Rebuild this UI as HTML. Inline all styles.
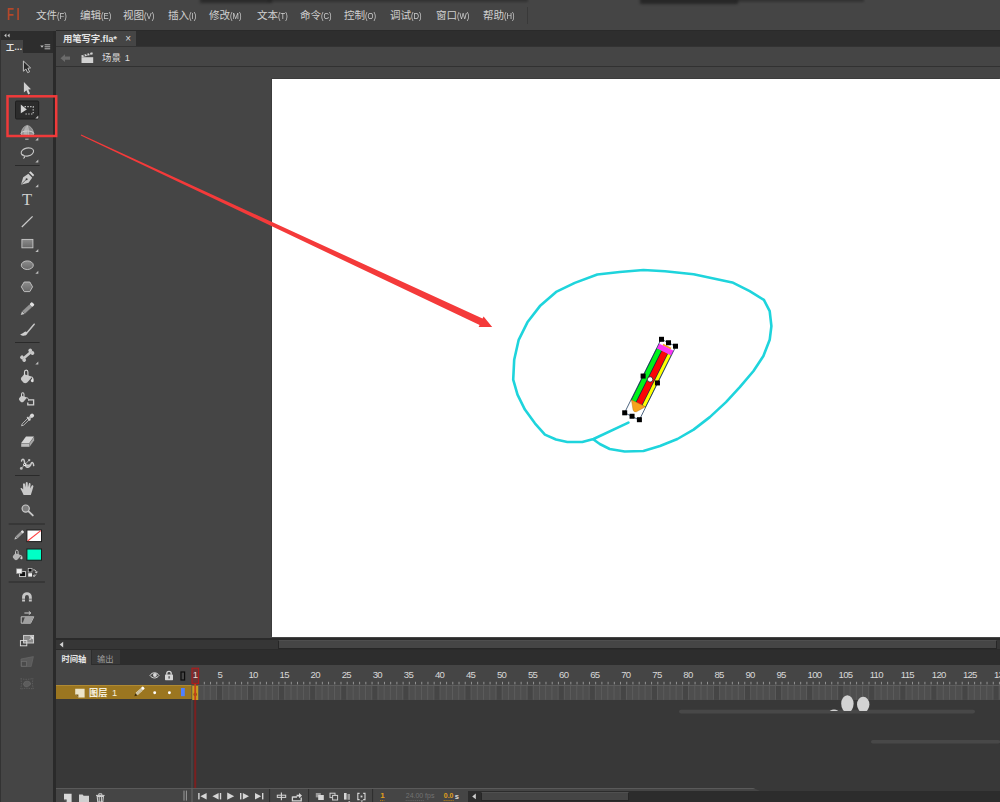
<!DOCTYPE html>
<html lang="zh-CN">
<head>
<meta charset="utf-8">
<title>用笔写字.fla</title>
<style>
*{box-sizing:border-box;margin:0;padding:0}
html,body{width:1000px;height:802px;overflow:hidden;background:#454545}
body{position:relative;font-family:"Liberation Sans","Noto Sans CJK SC",sans-serif;color:#d6d6d6;font-size:11px}
.abs{position:absolute}
#menubar{left:0;top:0;width:1000px;height:30px;background:#454545}
#menubar .mi{position:absolute;top:8px;height:14px;line-height:14px;font-size:10.6px;color:#d0d0d0;white-space:nowrap}
#menubar .mi i{font-style:normal;font-size:9.8px;display:inline-block;transform:scaleX(.78);transform-origin:0 50%;margin-left:0.3px}
#fl{position:absolute;left:7.3px;top:4.9px;font-size:16px;line-height:20px;color:#b5482a;font-weight:700;letter-spacing:3.5px}
/* tool panel */
#tools{left:0;top:30px;width:56px;height:772px;background:#454545}
#docbar{left:56px;top:30px;width:944px;height:17px;background:#2e2e2e}
#doctab{left:56px;top:31px;width:80px;height:16px;background:#454545}
#scenebar{left:56px;top:47px;width:944px;height:20px;background:#454545}
#stagebg{left:56px;top:67px;width:944px;height:571px;background:#454545}
#stage{left:272px;top:78.7px;width:728px;height:558.8px;background:#fff;box-shadow:-1px -1px 0 0 #3c3c3c}
#timeline{left:56px;top:651px;width:944px;height:151px;background:#383838}

#fl{transform:scaleX(0.72);transform-origin:0 0}
.ln{position:absolute;background:#2a2a2a}
#doctab .t{position:absolute;left:7px;top:1px;font-size:9.4px;line-height:13px;font-weight:700;color:#e4e4e4;white-space:nowrap;letter-spacing:-0.1px}
#doctab .x{position:absolute;left:69.2px;top:1px;font-size:10px;line-height:14px;color:#dadada;font-weight:400}
#scenebar .t{position:absolute;left:46px;top:4px;font-size:9.4px;line-height:13px;color:#dcdcdc;white-space:nowrap}

.tabt{font-size:8.3px;line-height:12px;white-space:nowrap}
#frames{background:#4e4e4e;border-top:1px solid #5e5e5e}
svg{position:absolute;overflow:visible}
</style>
</head>
<body>
<div id="menubar" class="abs">
  <div id="fl">Fl</div>
  <div class="mi" style="left:36px">文件<i>(F)</i></div>
  <div class="mi" style="left:80px">编辑<i>(E)</i></div>
  <div class="mi" style="left:123px">视图<i>(V)</i></div>
  <div class="mi" style="left:168px">插入<i>(I)</i></div>
  <div class="mi" style="left:209px">修改<i>(M)</i></div>
  <div class="mi" style="left:257px">文本<i>(T)</i></div>
  <div class="mi" style="left:300px">命令<i>(C)</i></div>
  <div class="mi" style="left:344px">控制<i>(O)</i></div>
  <div class="mi" style="left:390px">调试<i>(D)</i></div>
  <div class="mi" style="left:436px">窗口<i>(W)</i></div>
  <div class="mi" style="left:483px">帮助<i>(H)</i></div>
</div>
<div class="abs" style="left:0;top:0;width:1000px;height:10px;overflow:hidden;pointer-events:none">
  <div class="abs" style="left:200px;top:-5px;width:72px;height:8px;background:#222;opacity:.75;filter:blur(1.5px)"></div>
  <div class="abs" style="left:268px;top:-5px;width:260px;height:6.5px;background:#222;opacity:.5;filter:blur(1.2px)"></div>
  <div class="abs" style="left:640px;top:-5px;width:98px;height:8.5px;background:#222;opacity:.85;filter:blur(1.5px)"></div>
  <div class="abs" style="left:736px;top:-5px;width:128px;height:6.5px;background:#222;opacity:.5;filter:blur(1.2px)"></div>
</div>
<div class="ln" style="left:527px;top:7px;width:1px;height:17px;background:#393939"></div>
<div id="docbar" class="abs"></div>
<div id="doctab" class="abs"><span class="t">用笔写字.fla*</span><span class="x">×</span></div>
<div id="scenebar" class="abs">
  <svg style="left:4px;top:7px" width="11" height="9" viewBox="0 0 11 9"><path d="M0.5 4.2 L5 0.3 V2.6 H10 V5.8 H5 V8.1 Z" fill="#6b6b6b"/></svg>
  <svg style="left:25px;top:5px" width="13" height="12" viewBox="0 0 13 12"><path d="M0.5 5.2 H12.2 V11 H0.5 Z" fill="#d2d2d2"/><path d="M0.2 3.4 L11.3 0.2 L11.9 2.2 L0.8 5.2 Z" fill="#d2d2d2"/><path d="M2.6 2.6 l1 1.7 M5.4 1.8 l1 1.7 M8.2 1 l1 1.7" stroke="#454545" stroke-width="1.1"/></svg>
  <span class="t">场景<span style="margin-left:4px">1</span></span>
</div>
<div class="ln" style="left:0;top:30px;width:1000px;height:1px"></div>
<div class="ln" style="left:56px;top:46px;width:944px;height:1px;background:#333"></div>
<div class="ln" style="left:56px;top:66.4px;width:944px;height:1.6px;background:#313131"></div>
<div id="stagebg" class="abs"></div>
<div id="stage" class="abs"></div>
<!--STAGE_START-->
<svg id="stagesvg" style="left:0;top:0" width="1000" height="802" viewBox="0 0 1000 802">
  <!-- cyan hand-drawn curve -->
  <polyline fill="none" stroke="#1ed4dc" stroke-width="2.6" stroke-linejoin="round" stroke-linecap="round"
   points="593.5,439.5 599.8,444 609.7,449 624.7,451.5 643.4,451 660,446 677.4,439 693.6,429.6 709.8,417.1 726,402.1 739.8,387.2 753.5,371 763.4,356 769.7,339.8 771.4,326.1 769.7,311.1 763.9,299.9 749.7,291.2 732.3,282.4 693.6,274.2 665,271.2 643.4,270 619.7,272 597.3,274.5 574.8,282.9 556.1,291.9 539.9,306.1 527.4,322.3 518.7,339.8 514.2,359.8 513.2,379.7 517.5,394.7 524.9,409.6 534.9,423.3 544.9,434.6 556,439.5 567.3,442 582.3,442 593.5,439 628.4,422.6"/>
  <!-- red annotation arrow -->
  <path d="M81.2 134.6 L482.5 318.5 L483.6 316.4 L492.2 326.9 L478.6 327.1 L479.6 325 L80.8 135.6 Z" fill="#f43a3a"/>
  <!-- pencil symbol with free-transform box -->
  <g transform="translate(661.5 339.3) rotate(26.4) translate(-0.4 0)">
    <rect x="4" y="3.2" width="9" height="2" fill="#f7a21c"/>
    <rect x="0" y="10" width="16.4" height="58" fill="#0b2c4e"/>
    <rect x="0.6" y="10" width="4.6" height="57.6" fill="#00f21a"/>
    <rect x="6" y="10" width="6" height="57.6" fill="#fb0505"/>
    <rect x="12.7" y="10" width="3.2" height="57.6" fill="#ffff00"/>
    <rect x="0" y="4.8" width="16.4" height="5.4" fill="#fa35f6"/>
    <path d="M0.4 67.6 H16 L10.2 76 Q8.2 77.8 6.4 76 Z" fill="#f7a21c" stroke="#b07414" stroke-width="0.4"/>
    <rect x="0" y="0" width="16.4" height="82.2" fill="none" stroke="#1b3a5c" stroke-width="0.7"/>
  </g>
  <circle cx="650.1" cy="379.4" r="2.7" fill="#fff" stroke="#222" stroke-width="0.8"/>
  <g fill="#000"><rect x="659.00" y="336.80" width="5" height="5"/><rect x="666.00" y="340.25" width="5" height="5"/><rect x="673.00" y="343.70" width="5" height="5"/><rect x="640.60" y="373.55" width="5" height="5"/><rect x="654.95" y="380.45" width="5" height="5"/><rect x="622.20" y="410.30" width="5" height="5"/><rect x="629.55" y="413.75" width="5" height="5"/><rect x="636.90" y="417.20" width="5" height="5"/></g>
</svg>
<!--STAGE_END-->

<div id="tools" class="abs"></div>
<!--TOOLS_START-->
<!-- TOOL PANEL -->
<div class="ln" style="left:0;top:31px;width:1px;height:771px;background:#333"></div>
<div class="ln" style="left:1px;top:31px;width:53px;height:9px;background:#2d2d2d"></div>
<div class="ln" style="left:23px;top:40px;width:31px;height:13px;background:#2d2d2d"></div>
<div class="ln" style="left:53.4px;top:31px;width:2.6px;height:771px;background:#2a2a2a"></div>
<div class="abs" id="tooltab" style="left:6px;top:40.5px;font-size:8.4px;line-height:13px;font-weight:700;color:#e4e4e4;white-space:nowrap;letter-spacing:0.2px">工...</div>
<svg id="toolsvg" style="left:0;top:0" width="56" height="802" viewBox="0 0 56 802">
  <defs>
    <linearGradient id="gfill" x1="0" y1="0" x2="0" y2="1"><stop offset="0" stop-color="#8c8c8c"/><stop offset="1" stop-color="#686868"/></linearGradient>
  </defs>
  <!-- collapse arrows -->
  <path d="M6.4 33.6 L4.2 35.5 L6.4 37.4 Z M9.6 33.6 L7.4 35.5 L9.6 37.4 Z" fill="#c8c8c8"/>
  <!-- panel menu -->
  <path d="M40.2 45.6 h3.6 l-1.8 2.2 Z" fill="#c0c0c0"/>
  <path d="M44.6 44.8 h5.6 M44.6 46.8 h5.6 M44.6 48.8 h5.6" stroke="#b8b8b8" stroke-width="1"/>
  <!-- subselection (outlined arrow) -->
  <path d="M23.4 61 L23.4 71.2 L25.9 69 L27.6 72.6 L29.6 71.8 L27.9 68.2 L30.6 67.9 Z" fill="#2b2b2b" stroke="#c4c4c4" stroke-width="1" stroke-linejoin="round"/>
  <!-- selection (solid arrow) -->
  <path d="M23.9 82 L23.9 92.6 L26.4 90.3 L28.2 94.4 L30 93.6 L28.3 89.6 L31 89.3 Z" fill="#cfcfcf"/>
  <!-- selected tool: free transform -->
  <rect x="15.5" y="101" width="23.2" height="18" rx="1.2" fill="#2c2c2c" stroke="#1e1e1e" stroke-width="1"/>
  <path d="M20.8 104.6 L20.8 113.2 L26.8 109.6 Z" fill="#d4d4d4"/>
  <path d="M24.6 106.6 H33.2 V114 H24.6" fill="none" stroke="#d0d0d0" stroke-width="1.1" stroke-dasharray="1.3 1.5"/>
  <path d="M38.3 115.6 v3 h-3 Z" fill="#bdbdbd"/>
  <!-- 3d rotation -->
  <path d="M21.2 133.4 C21.4 129.4 23.8 126.2 27.3 125.4 C30.8 126.2 33.3 129.4 33.5 133.4 C31.2 135.8 23.5 135.8 21.2 133.4 Z" fill="#8c8c8c" stroke="#bcbcbc" stroke-width="0.7"/>
  <path d="M27.3 125.6 C24.6 127.4 23.4 130.6 23.6 134.6 L27.6 135.2 C27.9 131.6 27.9 128.6 27.3 125.6 Z" fill="#b0b0b0"/>
  <ellipse cx="27.4" cy="133.6" rx="6.4" ry="2.6" fill="none" stroke="#d0d0d0" stroke-width="1"/>
  <path d="M27.3 125.8 C28.6 129 28.8 132 28.4 136" fill="none" stroke="#c8c8c8" stroke-width="0.7"/>
  <path d="M25.2 139.2 h3.4" stroke="#c8c8c8" stroke-width="0.9"/>
  <path d="M38.3 137.6 v3 h-3 Z" fill="#bdbdbd"/>
  <!-- lasso -->
  <ellipse cx="27.4" cy="152" rx="6.3" ry="4" transform="rotate(-12 27.4 152)" fill="none" stroke="#c6c6c6" stroke-width="1.1"/>
  <path d="M22 154.4 C23.6 154.6 25.4 156.4 24.4 158 C23.8 158.8 23.2 158.4 23.4 157.6" fill="none" stroke="#c6c6c6" stroke-width="1"/>
  <path d="M38.3 159.4 v3 h-3 Z" fill="#bdbdbd"/>
  <path d="M15 165.5 H39.6" stroke="#2a2a2a" stroke-width="1"/>
  <!-- pen -->
  <path d="M20.9 184.8 L23.2 177.2 L28.4 173.8 L32.2 177.8 L28.6 182.8 Z" fill="#c9c9c9"/>
  <path d="M29 172.4 L30.6 171.2 L34.2 175 L33 176.6 Z" fill="#d6d6d6"/>
  <circle cx="26.6" cy="179.2" r="1" fill="#3a3a3a"/>
  <path d="M21.2 184.4 L26 179.8" stroke="#3a3a3a" stroke-width="0.7"/>
  <path d="M38.3 184.2 v3 h-3 Z" fill="#bdbdbd"/>
  <!-- line -->
  <path d="M21.8 227 L32.6 216.4" stroke="#cacaca" stroke-width="1.3"/>
  <!-- rect -->
  <rect x="21.9" y="239.4" width="11" height="8.4" fill="url(#gfill)" stroke="#c8c8c8" stroke-width="0.9"/>
  <path d="M38.3 249.0 v3 h-3 Z" fill="#bdbdbd"/>
  <!-- oval -->
  <ellipse cx="27.3" cy="265.2" rx="6" ry="4.3" fill="url(#gfill)" stroke="#c8c8c8" stroke-width="0.9"/>
  <path d="M38.3 270.8 v3 h-3 Z" fill="#bdbdbd"/>
  <!-- polystar -->
  <path d="M21.3 286.8 L24.2 282 H29.8 L32.6 286.8 L29.8 291.6 H24.2 Z" fill="url(#gfill)" stroke="#c8c8c8" stroke-width="0.9"/>
  <!-- pencil -->
  <g transform="translate(20.7 315.1) rotate(-43)">
    <path d="M0 0 L3.6 -1.9 V1.9 Z" fill="#c4c4c4"/>
    <rect x="4" y="-1.9" width="9.6" height="3.8" fill="#8e8e8e"/>
    <path d="M4 -0.6 H13.6 M4 0.7 H13.6" stroke="#a6a6a6" stroke-width="0.5"/>
    <rect x="13.8" y="-2" width="3.4" height="4" rx="1" fill="#e0e0e0"/>
  </g>
  <!-- brush -->
  <path d="M34.2 324.2 L27 332.8" stroke="#c6c6c6" stroke-width="1.5" stroke-linecap="round"/>
  <path d="M20.2 334.2 C22.6 334 23.6 331.6 25.8 331.4 C27.4 331.6 27.8 333.4 26.8 334.6 C25 336.4 21.8 336 20.2 334.2 Z" fill="#cfcfcf"/>
  <path d="M15 342.5 H39.6" stroke="#2a2a2a" stroke-width="1"/>
  <!-- bone -->
  <g transform="translate(27.2 355.2) rotate(-40)" fill="#c8c8c8">
    <rect x="-4.6" y="-1.3" width="9.2" height="2.6"/>
    <circle cx="-5.4" cy="-1.7" r="1.9"/><circle cx="-5.4" cy="1.7" r="1.9"/>
    <circle cx="5.4" cy="-1.7" r="1.9"/><circle cx="5.4" cy="1.7" r="1.9"/>
  </g>
  <path d="M38.3 361.4 v3 h-3 Z" fill="#bdbdbd"/>
  <!-- paint bucket -->
  <g id="bucket">
    <path d="M24.2 374.2 L32.4 376.8 L27.2 382.4 Q25.4 383.8 23.6 382.8 L21.2 380 Q20.4 378.6 21.4 377.4 Z" fill="#cacaca"/>
    <path d="M24.5 375.4 V372 C24.5 369.4 27.9 369.4 27.9 372 V376.6" fill="none" stroke="#d6d6d6" stroke-width="1.15"/>
    <path d="M32 376.8 C33.6 377.6 33.9 379.6 33.6 381.4 C33.2 382.6 30.8 382.4 30.8 380.8 C30.8 379.6 32 379.4 32.2 378.2 Z" fill="#dedede"/>
  </g>
  <!-- ink bottle -->
  <g>
    <g transform="translate(3.9 126.3) scale(0.72)">
      <path d="M24.2 374.2 L32.4 376.8 L27.2 382.4 Q25.4 383.8 23.6 382.8 L21.2 380 Q20.4 378.6 21.4 377.4 Z" fill="#cacaca"/>
      <path d="M24.5 375.4 V372 C24.5 369.4 27.9 369.4 27.9 372 V376.6" fill="none" stroke="#d6d6d6" stroke-width="1.4"/>
    </g>
    <path d="M27.2 397.8 C28.4 398.4 28.8 399.6 28.6 400.8" fill="none" stroke="#d0d0d0" stroke-width="1"/>
    <path d="M29 399.8 H33.6 V404.8 H27.8 V402.6" fill="none" stroke="#d2d2d2" stroke-width="1.3"/>
  </g>
  <!-- eyedropper -->
  <g transform="translate(21.5 425.8) rotate(-44)">
    <path d="M0 0 L2 -1 H9.6 V1 H2 Z" fill="none" stroke="#c8c8c8" stroke-width="0.8"/>
    <rect x="9.2" y="-2.2" width="1.8" height="4.4" fill="#d0d0d0"/>
    <rect x="11" y="-1.3" width="2" height="2.6" fill="#bcbcbc"/>
    <rect x="12.6" y="-1.9" width="4" height="3.8" rx="1.6" fill="#dadada"/>
  </g>
  <!-- eraser -->
  <path d="M21.2 443 L26 436.6 H34 L29.4 443 Z" fill="#d6d6d6"/>
  <path d="M21.2 443.4 H29.4 V446.8 H21.2 Z" fill="#bdbdbd"/>
  <path d="M29.6 443.2 L34.1 436.9 V440.4 L29.6 446.8 Z" fill="#a6a6a6"/>
  <!-- width tool -->
  <path d="M21.5 461 C22.2 458.8 23.8 458.8 24.3 461 C24.8 463.4 24.6 465.4 26.4 466.8 C28.8 468.2 30.6 465.8 31.2 463.6 C31.8 461.8 33.4 462.2 33.7 465.6" fill="none" stroke="#c8c8c8" stroke-width="1.5" stroke-linecap="round"/>
  <path d="M24.4 463.6 C25.6 468.4 30.4 467.6 31.2 463 C29.6 464.8 27 465 24.4 463.6 Z" fill="#c4c4c4"/>
  <path d="M21.2 468.4 L29.1 460.2" stroke="#c0c0c0" stroke-width="0.8"/>
  <circle cx="21.3" cy="468.4" r="1.4" fill="#bebebe"/>
  <circle cx="29.2" cy="460.1" r="1.2" fill="#bebebe"/>
  <circle cx="24.7" cy="464.4" r="1.5" fill="#f2f2f2"/>
  <circle cx="24.6" cy="464.4" r="0.6" fill="#555"/>
  <path d="M15 475.5 H39.6" stroke="#2a2a2a" stroke-width="1"/>
  <!-- hand -->
  <path d="M23.6 495 C22.6 492.6 21.4 490.6 20.4 488.6 C21 487.6 22.2 488 23.2 489.6 L23 484 C23.4 483 24.6 483 24.9 484 L25.4 487.6 L25.8 482.8 C26.2 481.8 27.4 481.8 27.7 482.8 L27.9 487.6 L28.9 483.6 C29.3 482.8 30.4 483 30.6 484 L30.2 488.4 L31.8 485.6 C32.4 485 33.4 485.4 33.4 486.4 C32.6 489.4 31.8 492 30.8 495 Z" fill="#c9c9c9"/>
  <!-- zoom -->
  <circle cx="25.7" cy="508.6" r="3.6" fill="#7e7e7e" stroke="#c8c8c8" stroke-width="1.2"/>
  <path d="M28.6 511.4 L32.8 515.4" stroke="#c8c8c8" stroke-width="1.9" stroke-linecap="round"/>
  <path d="M8.7 524 H44.9" stroke="#2a2a2a" stroke-width="1"/>
  <!-- stroke colour -->
  <g transform="translate(14.4 539.6) rotate(-44) scale(0.72)">
    <path d="M0 0 L3.6 -1.9 V1.9 Z" fill="#c4c4c4"/>
    <rect x="4" y="-1.9" width="9.6" height="3.8" fill="#9a9a9a"/>
    <rect x="13.8" y="-2" width="3.4" height="4" rx="1" fill="#e0e0e0"/>
  </g>
  <rect x="26.9" y="530" width="14.6" height="11.6" fill="#fff" stroke="#1c1c1c" stroke-width="1"/>
  <path d="M27.6 541 L40.8 530.6" stroke="#ff4040" stroke-width="1.1"/>
  <!-- fill colour -->
  <g transform="translate(-3.1 268.9) scale(0.76)">
    <path d="M24.2 374.2 L32.4 376.8 L27.2 382.4 Q25.4 383.8 23.6 382.8 L21.2 380 Q20.4 378.6 21.4 377.4 Z" fill="#b4b4b4"/>
    <path d="M24.5 375.4 V372 C24.5 369.4 27.9 369.4 27.9 372 V376.6" fill="none" stroke="#c4c4c4" stroke-width="1.3"/>
    <path d="M32 376.8 C33.6 377.6 33.9 379.6 33.6 381.4 C33.2 382.6 30.8 382.4 30.8 380.8 C30.8 379.6 32 379.4 32.2 378.2 Z" fill="#d0d0d0"/>
  </g>
  <rect x="26.9" y="549" width="14.6" height="11.2" fill="#00ffc6" stroke="#1c1c1c" stroke-width="1"/>
  <!-- black&white / swap -->
  <rect x="19.6" y="571.6" width="6" height="5" fill="#111" stroke="#d8d8d8" stroke-width="0.9"/>
  <rect x="16.4" y="568.8" width="5.6" height="4.8" fill="#f0f0f0" stroke="#888" stroke-width="0.6"/>
  <rect x="28.2" y="568.6" width="3.8" height="3.4" fill="#0c0c0c" stroke="#cfcfcf" stroke-width="0.7"/>
  <rect x="28.2" y="573.2" width="3.8" height="3.4" fill="#f2f2f2"/>
  <path d="M33.2 569.8 C35.8 569.6 36.8 571.6 36.4 573 M36.4 573 L35 571.8 M36.4 573 L37.6 571.6 M36 574.6 C35.6 575.6 34.6 576 33.4 575.8 M33.4 575.8 L34.6 574.8 M33.4 575.8 L34.6 577" fill="none" stroke="#d0d0d0" stroke-width="0.9"/>
  <path d="M8.7 582 H44.9" stroke="#2a2a2a" stroke-width="1"/>
  <!-- magnet -->
  <path d="M22.1 601.4 V597 A4.85 4.85 0 0 1 31.8 597 V601.4 H28.9 V597 A1.95 1.95 0 0 0 25 597 V601.4 Z" fill="#c6c6c6"/>
  <path d="M22.1 599.2 H25 M28.9 599.2 H31.8" stroke="#505050" stroke-width="0.8"/>
  <!-- skew/straighten -->
  <path d="M24.4 613 H30.6 M28.8 611.4 L30.8 613 L28.8 614.6" fill="none" stroke="#d0d0d0" stroke-width="1"/>
  <path d="M21.2 616.8 H33.8 L30.6 623.2 H21.2 Z" fill="none" stroke="#cfcfcf" stroke-width="0.9"/>
  <path d="M25 616.8 H33.8 L30.6 623.2 H22.6 Z" fill="#a0a0a0"/>
  <!-- scale -->
  <rect x="23.6" y="635.4" width="10" height="7.6" fill="#8a8a8a" stroke="#d6d6d6" stroke-width="0.9"/>
  <path d="M29.6 640 L32.4 637 M30.2 636.8 H32.6 V639.2" fill="none" stroke="#f0f0f0" stroke-width="0.9"/>
  <rect x="20.4" y="640.6" width="6.4" height="5.2" fill="none" stroke="#e0e0e0" stroke-width="0.9"/>
  <!-- disabled distort -->
  <path d="M21 659 L33.4 656.6 L31.2 666.4 H21 Z" fill="#5a5a5a" stroke="#676767" stroke-width="0.7"/>
  <rect x="21.4" y="661.4" width="5" height="4.8" fill="#4a4a4a" stroke="#707070" stroke-width="0.7"/>
  <!-- disabled envelope -->
  <path d="M20.8 678.6 C24 679.6 29 679.6 33 678.4 C32.2 682 32.4 686 33.4 689 C29 688 24.6 688 20.6 689.2 C21.6 686 21.6 682 20.8 678.6 Z" fill="none" stroke="#666" stroke-width="0.7" stroke-dasharray="1.4 1"/>
  <path d="M24 682.6 C25.6 680.6 29.6 680.8 30.4 683 C31 685 29.4 685.2 28.6 686 C27.2 687.2 24.8 687 24 685.6 C23.4 684.6 23.4 683.4 24 682.6 Z" fill="#5c5c5c" stroke="#707070" stroke-width="0.6"/>
  <!-- red highlight box -->
  <rect x="7.5" y="96.3" width="48.7" height="39.7" fill="none" stroke="#f03a3a" stroke-width="2.5"/>
</svg>
<div class="abs" style="left:22px;top:190.5px;width:10px;height:18px;font-family:'Liberation Serif',serif;font-size:16.5px;line-height:18px;color:#cfcfcf;text-align:center">T</div>
<!--TOOLS_END-->
<div id="timeline" class="abs"></div>
<!--TL_START-->
<!-- stage horizontal scrollbar -->
<div class="ln" style="left:56px;top:638px;width:944px;height:12px;background:#2a2a2a"></div>
<div class="ln" style="left:56px;top:640px;width:944px;height:9px;background:#363636"></div>
<div class="ln" style="left:278px;top:640px;width:719px;height:9px;background:#454545;border:1px solid #262626;border-top-color:#4e4e4e"></div>
<!-- timeline tabs -->
<div class="ln" style="left:56px;top:650px;width:944px;height:15px;background:#2d2d2d"></div>
<div class="ln" style="left:56px;top:650px;width:35px;height:15px;background:#454545"></div>
<div class="ln" style="left:92px;top:650px;width:28px;height:14px;background:#383838"></div>
<div class="abs tabt" style="left:61.5px;top:653.2px;color:#e6e6e6;font-weight:700">时间轴</div>
<div class="abs tabt" style="left:97px;top:653.2px;color:#9c9c9c">输出</div>
<!-- header row -->
<div class="ln" style="left:56px;top:665px;width:944px;height:20px;background:#454545"></div>
<!-- layer row -->
<div class="ln" style="left:56px;top:685px;width:135.5px;height:14px;background:#9b7620;border-top:1px solid #b08a32"></div>
<div class="abs" style="left:89px;top:687.2px;font-size:9.2px;line-height:13px;font-weight:700;color:#f4eedc;white-space:nowrap">图层<span style="font-weight:400;margin-left:4.6px">1</span></div>
<div class="ln" id="frames" style="left:197.8px;top:685px;width:802.2px;height:14.8px"></div>
<!-- bottom bar -->
<div class="ln" style="left:56px;top:788px;width:944px;height:14px;background:#454545;border-top:1px solid #5a5a5a"></div>
<div class="ln" style="left:468px;top:791px;width:532px;height:11px;background:#2c2c2c"></div>
<div class="ln" style="left:480.5px;top:792px;width:148px;height:9px;background:#454545;border:1px solid #262626;border-top-color:#505050"></div>
<svg id="tlsvg" style="left:0;top:0" width="1000" height="802" viewBox="0 0 1000 802">
  <!-- scroll arrows -->
  <path d="M59.6 644.6 L63.2 641.8 V647.4 Z" fill="#d0d0d0"/>
  <path d="M472.2 796.4 L475.8 793.6 V799.2 Z" fill="#d0d0d0"/>
  <!-- header icons -->
  <path d="M150 675.5 C152.2 671.8 156.8 671.8 159 675.5 C156.8 678.8 152.2 678.8 150 675.5 Z" fill="none" stroke="#d4d4d4" stroke-width="1"/>
  <circle cx="154.9" cy="675" r="1.9" fill="#d8d8d8"/>
  <rect x="165" y="674.6" width="8" height="5.6" rx="0.6" fill="#d6d6d6"/>
  <path d="M166.8 674.8 V673.4 C166.8 670.6 171.2 670.6 171.2 673.4 V674.8" fill="none" stroke="#d6d6d6" stroke-width="1.3"/>
  <rect x="168.5" y="676.2" width="1.2" height="2.4" fill="#454545"/>
  <rect x="181" y="672" width="3.6" height="8" fill="none" stroke="#0c0c0c" stroke-width="1.2"/>
  <!-- ruler -->
  <g font-family="Liberation Sans, sans-serif" font-size="9.6" fill="#d8d8d8" letter-spacing="-0.75">
    <text x="217.4" y="678.2">5</text><text x="248.5" y="678.2">10</text><text x="279.6" y="678.2">15</text><text x="310.6" y="678.2">20</text><text x="341.7" y="678.2">25</text><text x="372.7" y="678.2">30</text><text x="403.8" y="678.2">35</text><text x="434.9" y="678.2">40</text><text x="465.9" y="678.2">45</text><text x="497.0" y="678.2">50</text><text x="528.0" y="678.2">55</text><text x="559.1" y="678.2">60</text><text x="590.2" y="678.2">65</text><text x="621.2" y="678.2">70</text><text x="652.3" y="678.2">75</text><text x="683.3" y="678.2">80</text><text x="714.4" y="678.2">85</text><text x="745.5" y="678.2">90</text><text x="776.5" y="678.2">95</text><text x="807.6" y="678.2">100</text><text x="838.6" y="678.2">105</text><text x="869.7" y="678.2">110</text><text x="900.8" y="678.2">115</text><text x="931.8" y="678.2">120</text><text x="962.9" y="678.2">125</text><text x="993.9" y="678.2">130</text>
  </g>
  <path d="M204.32 681.8V684.4M210.54 681.8V684.4M216.75 681.8V684.4M222.96 681.8V684.4M229.17 681.8V684.4M235.38 681.8V684.4M241.60 681.8V684.4M247.81 681.8V684.4M254.02 681.8V684.4M260.23 681.8V684.4M266.44 681.8V684.4M272.66 681.8V684.4M278.87 681.8V684.4M285.08 681.8V684.4M291.29 681.8V684.4M297.50 681.8V684.4M303.72 681.8V684.4M309.93 681.8V684.4M316.14 681.8V684.4M322.35 681.8V684.4M328.56 681.8V684.4M334.78 681.8V684.4M340.99 681.8V684.4M347.20 681.8V684.4M353.41 681.8V684.4M359.62 681.8V684.4M365.84 681.8V684.4M372.05 681.8V684.4M378.26 681.8V684.4M384.47 681.8V684.4M390.68 681.8V684.4M396.90 681.8V684.4M403.11 681.8V684.4M409.32 681.8V684.4M415.53 681.8V684.4M421.74 681.8V684.4M427.96 681.8V684.4M434.17 681.8V684.4M440.38 681.8V684.4M446.59 681.8V684.4M452.80 681.8V684.4M459.02 681.8V684.4M465.23 681.8V684.4M471.44 681.8V684.4M477.65 681.8V684.4M483.86 681.8V684.4M490.08 681.8V684.4M496.29 681.8V684.4M502.50 681.8V684.4M508.71 681.8V684.4M514.92 681.8V684.4M521.14 681.8V684.4M527.35 681.8V684.4M533.56 681.8V684.4M539.77 681.8V684.4M545.98 681.8V684.4M552.20 681.8V684.4M558.41 681.8V684.4M564.62 681.8V684.4M570.83 681.8V684.4M577.04 681.8V684.4M583.26 681.8V684.4M589.47 681.8V684.4M595.68 681.8V684.4M601.89 681.8V684.4M608.10 681.8V684.4M614.32 681.8V684.4M620.53 681.8V684.4M626.74 681.8V684.4M632.95 681.8V684.4M639.16 681.8V684.4M645.38 681.8V684.4M651.59 681.8V684.4M657.80 681.8V684.4M664.01 681.8V684.4M670.22 681.8V684.4M676.44 681.8V684.4M682.65 681.8V684.4M688.86 681.8V684.4M695.07 681.8V684.4M701.28 681.8V684.4M707.50 681.8V684.4M713.71 681.8V684.4M719.92 681.8V684.4M726.13 681.8V684.4M732.34 681.8V684.4M738.56 681.8V684.4M744.77 681.8V684.4M750.98 681.8V684.4M757.19 681.8V684.4M763.40 681.8V684.4M769.62 681.8V684.4M775.83 681.8V684.4M782.04 681.8V684.4M788.25 681.8V684.4M794.46 681.8V684.4M800.68 681.8V684.4M806.89 681.8V684.4M813.10 681.8V684.4M819.31 681.8V684.4M825.52 681.8V684.4M831.74 681.8V684.4M837.95 681.8V684.4M844.16 681.8V684.4M850.37 681.8V684.4M856.58 681.8V684.4M862.80 681.8V684.4M869.01 681.8V684.4M875.22 681.8V684.4M881.43 681.8V684.4M887.64 681.8V684.4M893.86 681.8V684.4M900.07 681.8V684.4M906.28 681.8V684.4M912.49 681.8V684.4M918.70 681.8V684.4M924.92 681.8V684.4M931.13 681.8V684.4M937.34 681.8V684.4M943.55 681.8V684.4M949.76 681.8V684.4M955.98 681.8V684.4M962.19 681.8V684.4M968.40 681.8V684.4M974.61 681.8V684.4M980.82 681.8V684.4M987.04 681.8V684.4M993.25 681.8V684.4M999.46 681.8V684.4" stroke="#9c9c9c" stroke-width="0.9" fill="none"/>
  <!-- layer row icons -->
  <path d="M75.2 688.8 H84.6 V697.6 H78.4 L75.2 694.6 Z" fill="#ece4c8"/>
  <path d="M75.2 694.6 H78.4 V697.6 Z" fill="#7a5c18"/>
  <g transform="translate(134.4 696.2) rotate(-43) scale(0.74)">
    <path d="M0 0 L3.6 -1.9 V1.9 Z" fill="#3a2c0c"/>
    <rect x="4" y="-2" width="9.6" height="4" fill="#e8e0c8"/>
    <path d="M4 -0.6 H13.6 M4 0.8 H13.6" stroke="#8a7a50" stroke-width="0.6"/>
    <rect x="13.8" y="-2.1" width="3.6" height="4.2" rx="1" fill="#fff"/>
  </g>
  <circle cx="154.7" cy="692.8" r="1.45" fill="#fff"/>
  <circle cx="169.4" cy="692.8" r="1.45" fill="#fff"/>
  <rect x="181" y="688" width="3.8" height="8.2" fill="#4f80ff"/>
  <!-- frame cells -->
  <path d="M216.45 686h6.212v13.8h-6.212ZM247.51 686h6.212v13.8h-6.212ZM278.57 686h6.212v13.8h-6.212ZM309.63 686h6.212v13.8h-6.212ZM340.69 686h6.212v13.8h-6.212ZM371.75 686h6.212v13.8h-6.212ZM402.81 686h6.212v13.8h-6.212ZM433.87 686h6.212v13.8h-6.212ZM464.93 686h6.212v13.8h-6.212ZM495.99 686h6.212v13.8h-6.212ZM527.05 686h6.212v13.8h-6.212ZM558.11 686h6.212v13.8h-6.212ZM589.17 686h6.212v13.8h-6.212ZM620.23 686h6.212v13.8h-6.212ZM651.29 686h6.212v13.8h-6.212ZM682.35 686h6.212v13.8h-6.212ZM713.41 686h6.212v13.8h-6.212ZM744.47 686h6.212v13.8h-6.212ZM775.53 686h6.212v13.8h-6.212ZM806.59 686h6.212v13.8h-6.212ZM837.65 686h6.212v13.8h-6.212ZM868.71 686h6.212v13.8h-6.212ZM899.77 686h6.212v13.8h-6.212ZM930.83 686h6.212v13.8h-6.212ZM961.89 686h6.212v13.8h-6.212ZM992.95 686h6.212v13.8h-6.212Z" fill="#454545"/>
  <path d="M197.81 686V699.8M204.02 686V699.8M210.24 686V699.8M216.45 686V699.8M222.66 686V699.8M228.87 686V699.8M235.08 686V699.8M241.30 686V699.8M247.51 686V699.8M253.72 686V699.8M259.93 686V699.8M266.14 686V699.8M272.36 686V699.8M278.57 686V699.8M284.78 686V699.8M290.99 686V699.8M297.20 686V699.8M303.42 686V699.8M309.63 686V699.8M315.84 686V699.8M322.05 686V699.8M328.26 686V699.8M334.48 686V699.8M340.69 686V699.8M346.90 686V699.8M353.11 686V699.8M359.32 686V699.8M365.54 686V699.8M371.75 686V699.8M377.96 686V699.8M384.17 686V699.8M390.38 686V699.8M396.60 686V699.8M402.81 686V699.8M409.02 686V699.8M415.23 686V699.8M421.44 686V699.8M427.66 686V699.8M433.87 686V699.8M440.08 686V699.8M446.29 686V699.8M452.50 686V699.8M458.72 686V699.8M464.93 686V699.8M471.14 686V699.8M477.35 686V699.8M483.56 686V699.8M489.78 686V699.8M495.99 686V699.8M502.20 686V699.8M508.41 686V699.8M514.62 686V699.8M520.84 686V699.8M527.05 686V699.8M533.26 686V699.8M539.47 686V699.8M545.68 686V699.8M551.90 686V699.8M558.11 686V699.8M564.32 686V699.8M570.53 686V699.8M576.74 686V699.8M582.96 686V699.8M589.17 686V699.8M595.38 686V699.8M601.59 686V699.8M607.80 686V699.8M614.02 686V699.8M620.23 686V699.8M626.44 686V699.8M632.65 686V699.8M638.86 686V699.8M645.08 686V699.8M651.29 686V699.8M657.50 686V699.8M663.71 686V699.8M669.92 686V699.8M676.14 686V699.8M682.35 686V699.8M688.56 686V699.8M694.77 686V699.8M700.98 686V699.8M707.20 686V699.8M713.41 686V699.8M719.62 686V699.8M725.83 686V699.8M732.04 686V699.8M738.26 686V699.8M744.47 686V699.8M750.68 686V699.8M756.89 686V699.8M763.10 686V699.8M769.32 686V699.8M775.53 686V699.8M781.74 686V699.8M787.95 686V699.8M794.16 686V699.8M800.38 686V699.8M806.59 686V699.8M812.80 686V699.8M819.01 686V699.8M825.22 686V699.8M831.44 686V699.8M837.65 686V699.8M843.86 686V699.8M850.07 686V699.8M856.28 686V699.8M862.50 686V699.8M868.71 686V699.8M874.92 686V699.8M881.13 686V699.8M887.34 686V699.8M893.56 686V699.8M899.77 686V699.8M905.98 686V699.8M912.19 686V699.8M918.40 686V699.8M924.62 686V699.8M930.83 686V699.8M937.04 686V699.8M943.25 686V699.8M949.46 686V699.8M955.68 686V699.8M961.89 686V699.8M968.10 686V699.8M974.31 686V699.8M980.52 686V699.8M986.74 686V699.8M992.95 686V699.8M999.16 686V699.8" stroke="#5e5e5e" stroke-width="0.9" fill="none"/>
  <!-- first keyframe -->
  <rect x="191.5" y="685" width="1.2" height="14" fill="#505050"/>
  <rect x="192.2" y="685.5" width="6" height="14.5" fill="#c8a022"/>
  <circle cx="195.2" cy="694.4" r="1.8" fill="#8a5a10"/>
  <!-- playhead -->
  <path d="M195.2 683.6 V700" stroke="#c8401a" stroke-width="1.8"/>
  <path d="M195.2 700 V788" stroke="#7a2020" stroke-width="2"/>
  <rect x="192" y="668.2" width="6.6" height="15.4" fill="rgba(150,30,30,0.45)" stroke="#b01c1c" stroke-width="1.1"/>
  <text x="192.8" y="678.2" font-family="Liberation Sans, sans-serif" font-size="9.6" fill="#e6d8d8">1</text>
  <!-- divider between layers and frames -->
  <path d="M192 700 V788" stroke="#464646" stroke-width="1.8"/>
  <path d="M192 788.5 V802" stroke="#6a6a6a" stroke-width="1"/>
  <!-- bottom: layer buttons -->
  <path d="M64 793.8 H71.6 V802 H66.6 L64 799.4 Z" fill="#d8d8d8"/>
  <path d="M64 799.4 H66.6 V802 Z" fill="#454545"/>
  <path d="M79 794.6 H82.6 L83.6 795.8 H89 V802 H79 Z" fill="#d0d0d0"/>
  <path d="M97.2 796.4 H103.4 L102.8 802 H97.8 Z" fill="none" stroke="#d0d0d0" stroke-width="1.1"/>
  <path d="M96 795.4 H104.6 M98.8 795.2 V793.8 H101.8 V795.2 M99.2 797 V802 M101.4 797 V802" stroke="#d0d0d0" stroke-width="1" fill="none"/>
  <path d="M184 790.6 V800.6 M186.4 790.6 V800.6" stroke="#9a9a9a" stroke-width="1"/>
  <!-- play controls -->
  <g fill="#d6d6d6">
    <rect x="198.2" y="793" width="1.4" height="6.4"/><path d="M206.6 793 V799.4 L200.4 796.2 Z"/>
    <path d="M218.6 793 V799.4 L212.4 796.2 Z"/><rect x="219.8" y="793" width="1.4" height="6.4"/>
    <path d="M227.2 792.6 V799.8 L234.2 796.2 Z"/>
    <rect x="240" y="793" width="1.4" height="6.4"/><path d="M242.8 793 V799.4 L249 796.2 Z"/>
    <path d="M255 793 V799.4 L261.2 796.2 Z"/><rect x="262" y="793" width="1.4" height="6.4"/>
  </g>
  <path d="M269.6 789 V802 M308.6 789 V802 M372.6 789 V802" stroke="#2e2e2e" stroke-width="1"/>
  <!-- frame / fps / time readouts -->
  <g font-family="Liberation Sans, sans-serif" font-size="8">
    <text x="380.2" y="798.2" font-weight="700" fill="#e0a01c">1</text>
    <text x="405.8" y="798" fill="#727272" textLength="28.6" lengthAdjust="spacingAndGlyphs">24.00 fps</text>
    <text x="443.8" y="798.2" font-weight="700" fill="#e0a01c" textLength="9.6" lengthAdjust="spacingAndGlyphs">0.0</text>
    <text x="454.8" y="798.8" font-weight="700" fill="#dcdcdc" font-size="7.6">s</text>
  </g>
  <path d="M380 800.6 H384.4 M443.6 800.6 H453.8" stroke="#b07c18" stroke-width="1" stroke-dasharray="1.2 0.7"/>
  <path d="M405.6 800.6 H424" stroke="#606060" stroke-width="1" stroke-dasharray="1.2 0.7"/>
  <!-- center frame -->
  <path d="M281.4 792.6 V800.2" stroke="#d6d6d6" stroke-width="1.1"/>
  <rect x="277.3" y="795.2" width="8.4" height="2.2" fill="none" stroke="#d6d6d6" stroke-width="1"/>
  <!-- loop -->
  <path d="M292.4 796.6 V800.8 H301.2 V797.4 M292.4 797 H297" fill="none" stroke="#d6d6d6" stroke-width="1.3"/>
  <path d="M296.6 794.8 H299 V793 L302 795.6 L299 798.2 V796.6 H296.6 Z" fill="#d6d6d6"/>
  <!-- onion icons -->
  <rect x="315.8" y="793" width="5" height="4.4" fill="#9a9a9a"/><rect x="318.2" y="795" width="5.6" height="5" fill="#d8d8d8"/>
  <rect x="330" y="793.2" width="5" height="4.4" fill="none" stroke="#d0d0d0" stroke-width="1"/><rect x="332.6" y="795.4" width="5" height="4.6" fill="#454545" stroke="#d0d0d0" stroke-width="1"/>
  <rect x="344" y="793" width="2.6" height="6.6" fill="#d6d6d6"/><rect x="347.4" y="794" width="2.6" height="5.8" fill="#9a9a9a"/><path d="M348 801 h2.4 l-1.2 1 Z" fill="#d0d0d0"/>
  <path d="M359.6 793.4 H357.8 V799.6 H359.6 M363.2 793.4 H365 V799.6 H363.2" fill="none" stroke="#d6d6d6" stroke-width="1.1"/>
  <rect x="360.6" y="795.6" width="1.8" height="1.8" fill="#d6d6d6"/><path d="M360.4 800.6 h3 l-1.5 1.3 Z" fill="#d0d0d0"/>
  <!-- watermark remnants -->
  <path d="M752 787.4 L760 791 H1000 V787.4 Z" fill="#383838"/>
  <path d="M681 711.6 H974 M873 741.8 H1000" stroke="#555" stroke-width="2" stroke-dasharray="2.2 1.4" opacity="0.6"/>
  <rect x="679" y="709.8" width="296" height="3.6" rx="1.8" fill="#484848"/>
  <rect x="871" y="740" width="129" height="3.6" rx="1.8" fill="#484848"/>
  <clipPath id="eyeclip"><rect x="820" y="690" width="70" height="21"/></clipPath>
  <g clip-path="url(#eyeclip)" fill="#d2d2d2">
    <ellipse cx="847.4" cy="703.8" rx="6.2" ry="8.6"/>
    <ellipse cx="863.2" cy="704.6" rx="6.2" ry="7.8"/>
    <ellipse cx="834" cy="713" rx="5" ry="3.6"/>
  </g>
</svg>
<!--TL_END-->

</body>
</html>
